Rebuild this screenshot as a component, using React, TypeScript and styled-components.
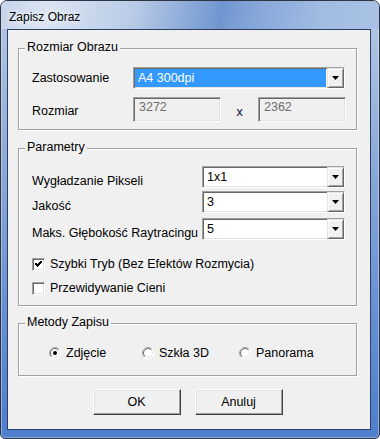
import styled, { createGlobalStyle } from 'styled-components';

const GlobalStyle = createGlobalStyle`
  html, body {
    margin: 0;
    padding: 0;
    background: #fff;
  }
  body {
    font-family: "Liberation Sans", Arial, sans-serif;
    font-size: 12.5px;
    color: #000;
  }
  * {
    box-sizing: border-box;
  }
`;

const Window = styled.div`
  width: 380px;
  height: 439px;
  border: 1px solid #2f3540;
  border-radius: 7px 7px 5px 5px;
  padding: 0 8px 8px 6px;
  display: flex;
  flex-direction: column;
  overflow: hidden;
  background: linear-gradient(180deg, #b6c9e5 0%, #93b0da 30%, #6890d2 70%, #4e7ecd 100%);
  box-shadow: inset 0 0 0 1px rgba(255, 255, 255, 0.35);
`;

const TitleBar = styled.div`
  height: 28px;
  margin: 0 -8px 0 -6px;
  padding: 3px 0 0 8px;
  display: flex;
  align-items: center;
  font-size: 12px;
  background: linear-gradient(100deg, #c3d3ea 0%, #dbe5f2 12%, #b9cbe7 35%, #7096d0 58%, #87a8da 68%, #a3bde2 85%, #a8c1e4 100%);
  text-shadow: 0 0 6px #fff, 0 0 10px rgba(255, 255, 255, 0.8);
`;

const Client = styled.div`
  flex: 1;
  border: 1px solid #2b3f63;
  background: #f0f0f0;
  padding: 0 13px 0 10px;
  display: flex;
  flex-direction: column;
`;

const Group = styled.div<{ $top: number; $pad: string }>`
  position: relative;
  margin-top: ${(p) => p.$top}px;
  border: 1px solid #a0a0a0;
  box-shadow: inset 1px 1px 0 #fff, 1px 1px 0 #fff;
  padding: ${(p) => p.$pad};
`;

const Caption = styled.span`
  position: absolute;
  top: -9px;
  left: 6px;
  padding: 0 2px;
  line-height: 15px;
  background: #f0f0f0;
`;

const Row = styled.div<{ $gap?: number; $label: number; $h: number }>`
  display: grid;
  grid-template-columns: ${(p) => p.$label}px auto;
  grid-template-rows: ${(p) => p.$h}px;
  align-items: center;
  margin-top: ${(p) => p.$gap ?? 0}px;
`;

const Label = styled.span<{ $shift?: number }>`
  line-height: 15px;
  padding-top: ${(p) => (p.$shift ?? 0) * 2}px;
  white-space: nowrap;
`;

const Combo = styled.div<{ $w: number }>`
  width: ${(p) => p.$w}px;
  height: 22px;
  display: flex;
  background: #fff;
  border: 1px solid;
  border-color: #a0a0a0 #fff #fff #a0a0a0;
  box-shadow: inset 1px 1px 0 #696969, inset -1px -1px 0 #e3e3e3;
`;

const ComboValue = styled.div<{ $selected?: boolean }>`
  flex: 1;
  margin: 1px;
  padding: 0 0 0 3px;
  display: flex;
  align-items: center;
  background: ${(p) => (p.$selected ? '#3399ff' : 'transparent')};
  color: ${(p) => (p.$selected ? '#fff' : '#000')};
`;

const ArrowButton = styled.div`
  width: 17px;
  display: flex;
  align-items: center;
  justify-content: center;
  background: #f0f0f0;
  border: 1px solid;
  border-color: #e3e3e3 #696969 #696969 #e3e3e3;
  box-shadow: inset 1px 1px 0 #fff, inset -1px -1px 0 #a0a0a0;
`;

const SizeRow = styled.div`
  display: flex;
  align-items: center;
`;

const Field = styled.div`
  width: 88px;
  height: 25px;
  padding: 2px 0 0 5px;
  line-height: 15px;
  color: #6d6d6d;
  background: #f0f0f0;
  border: 1px solid;
  border-color: #a0a0a0 #fff #fff #a0a0a0;
  box-shadow: inset 1px 1px 0 #696969, inset -1px -1px 0 #e3e3e3;
`;

const Times = styled.span`
  width: 37px;
  text-align: center;
  padding-top: 5px;
  color: #0a0a3c;
`;

const CheckRow = styled.label<{ $gap: number }>`
  display: flex;
  align-items: center;
  gap: 5px;
  height: 16px;
  margin-top: ${(p) => p.$gap}px;
`;

const Box = styled.span`
  width: 13px;
  height: 13px;
  display: flex;
  align-items: center;
  justify-content: center;
  background: #fff;
  border: 1px solid;
  border-color: #a0a0a0 #fff #fff #a0a0a0;
  box-shadow: inset 1px 1px 0 #696969, inset -1px -1px 0 #e3e3e3;
`;

const RadioRow = styled.div`
  display: grid;
  grid-template-columns: 93px 97px auto;
  height: 16px;
`;

const RadioItem = styled.label`
  display: flex;
  align-items: center;
  gap: 5px;
`;

const ButtonRow = styled.div`
  display: flex;
  justify-content: center;
  gap: 14px;
  margin-top: 13px;
`;

const Button = styled.button`
  width: 88px;
  height: 26px;
  padding: 0;
  font: inherit;
  color: #000;
  background: #f0f0f0;
  border: 1px solid;
  border-color: #fff #404040 #404040 #fff;
  box-shadow: inset -1px -1px 0 #a0a0a0, inset 1px 1px 0 #e3e3e3;
`;

const Arrow = () => (
  <svg width="7" height="4" viewBox="0 0 7 4">
    <polygon points="0,0 7,0 3.5,4" fill="#000" />
  </svg>
);

const Select = ({ value, width, selected }: { value: string; width: number; selected?: boolean }) => (
  <Combo $w={width}>
    <ComboValue $selected={selected}>{value}</ComboValue>
    <ArrowButton>
      <Arrow />
    </ArrowButton>
  </Combo>
);

const CheckBox = ({ checked }: { checked?: boolean }) => (
  <Box>
    {checked && (
      <svg width="9" height="9" viewBox="0 0 9 9" shapeRendering="crispEdges">
        <polyline points="1.5,3.5 3.5,5.5 7.5,1.5" fill="none" stroke="#000" strokeWidth="2" />
      </svg>
    )}
  </Box>
);

const Radio = ({ checked }: { checked?: boolean }) => (
  <svg width="12" height="12" viewBox="0 0 12 12">
    <defs>
      <linearGradient id="rOuter" x1="0" y1="0" x2="1" y2="1">
        <stop offset="0.5" stopColor="#a0a0a0" />
        <stop offset="0.5" stopColor="#fff" />
      </linearGradient>
      <linearGradient id="rInner" x1="0" y1="0" x2="1" y2="1">
        <stop offset="0.5" stopColor="#696969" />
        <stop offset="0.5" stopColor="#e3e3e3" />
      </linearGradient>
    </defs>
    <circle cx="6" cy="6" r="5.5" fill="#fff" stroke="url(#rOuter)" />
    <circle cx="6" cy="6" r="4.5" fill="#fff" stroke="url(#rInner)" />
    {checked && <circle cx="6" cy="6" r="2" fill="#000" />}
  </svg>
);

export default function App() {
  return (
    <>
      <GlobalStyle />
      <Window>
        <TitleBar>Zapisz Obraz</TitleBar>
        <Client>
          <Group $top={18} $pad="18px 10px 7px 13px">
            <Caption>Rozmiar Obrazu</Caption>
            <Row $label={101} $h={22}>
              <Label>Zastosowanie</Label>
              <Select value="A4 300dpi" width={212} selected />
            </Row>
            <Row $label={101} $h={25} $gap={8}>
              <Label $shift={2}>Rozmiar</Label>
              <SizeRow>
                <Field>3272</Field>
                <Times>x</Times>
                <Field>2362</Field>
              </SizeRow>
            </Row>
          </Group>

          <Group $top={18} $pad="17px 10px 9px 13px">
            <Caption>Parametry</Caption>
            <Row $label={170} $h={22}>
              <Label $shift={4.5}>Wygładzanie Pikseli</Label>
              <Select value="1x1" width={143} />
            </Row>
            <Row $label={170} $h={22} $gap={3}>
              <Label $shift={4.5}>Jakość</Label>
              <Select value="3" width={143} />
            </Row>
            <Row $label={170} $h={22} $gap={5}>
              <Label $shift={4.5}>Maks. Głębokość Raytracingu</Label>
              <Select value="5" width={143} />
            </Row>
            <CheckRow $gap={16}>
              <CheckBox checked />
              Szybki Tryb (Bez Efektów Rozmycia)
            </CheckRow>
            <CheckRow $gap={8}>
              <CheckBox />
              Przewidywanie Cieni
            </CheckRow>
          </Group>

          <Group $top={17} $pad="21px 10px 14px 30px">
            <Caption>Metody Zapisu</Caption>
            <RadioRow>
              <RadioItem>
                <Radio checked />
                Zdjęcie
              </RadioItem>
              <RadioItem>
                <Radio />
                Szkła 3D
              </RadioItem>
              <RadioItem>
                <Radio />
                Panorama
              </RadioItem>
            </RadioRow>
          </Group>

          <ButtonRow>
            <Button>OK</Button>
            <Button>Anuluj</Button>
          </ButtonRow>
        </Client>
      </Window>
    </>
  );
}
